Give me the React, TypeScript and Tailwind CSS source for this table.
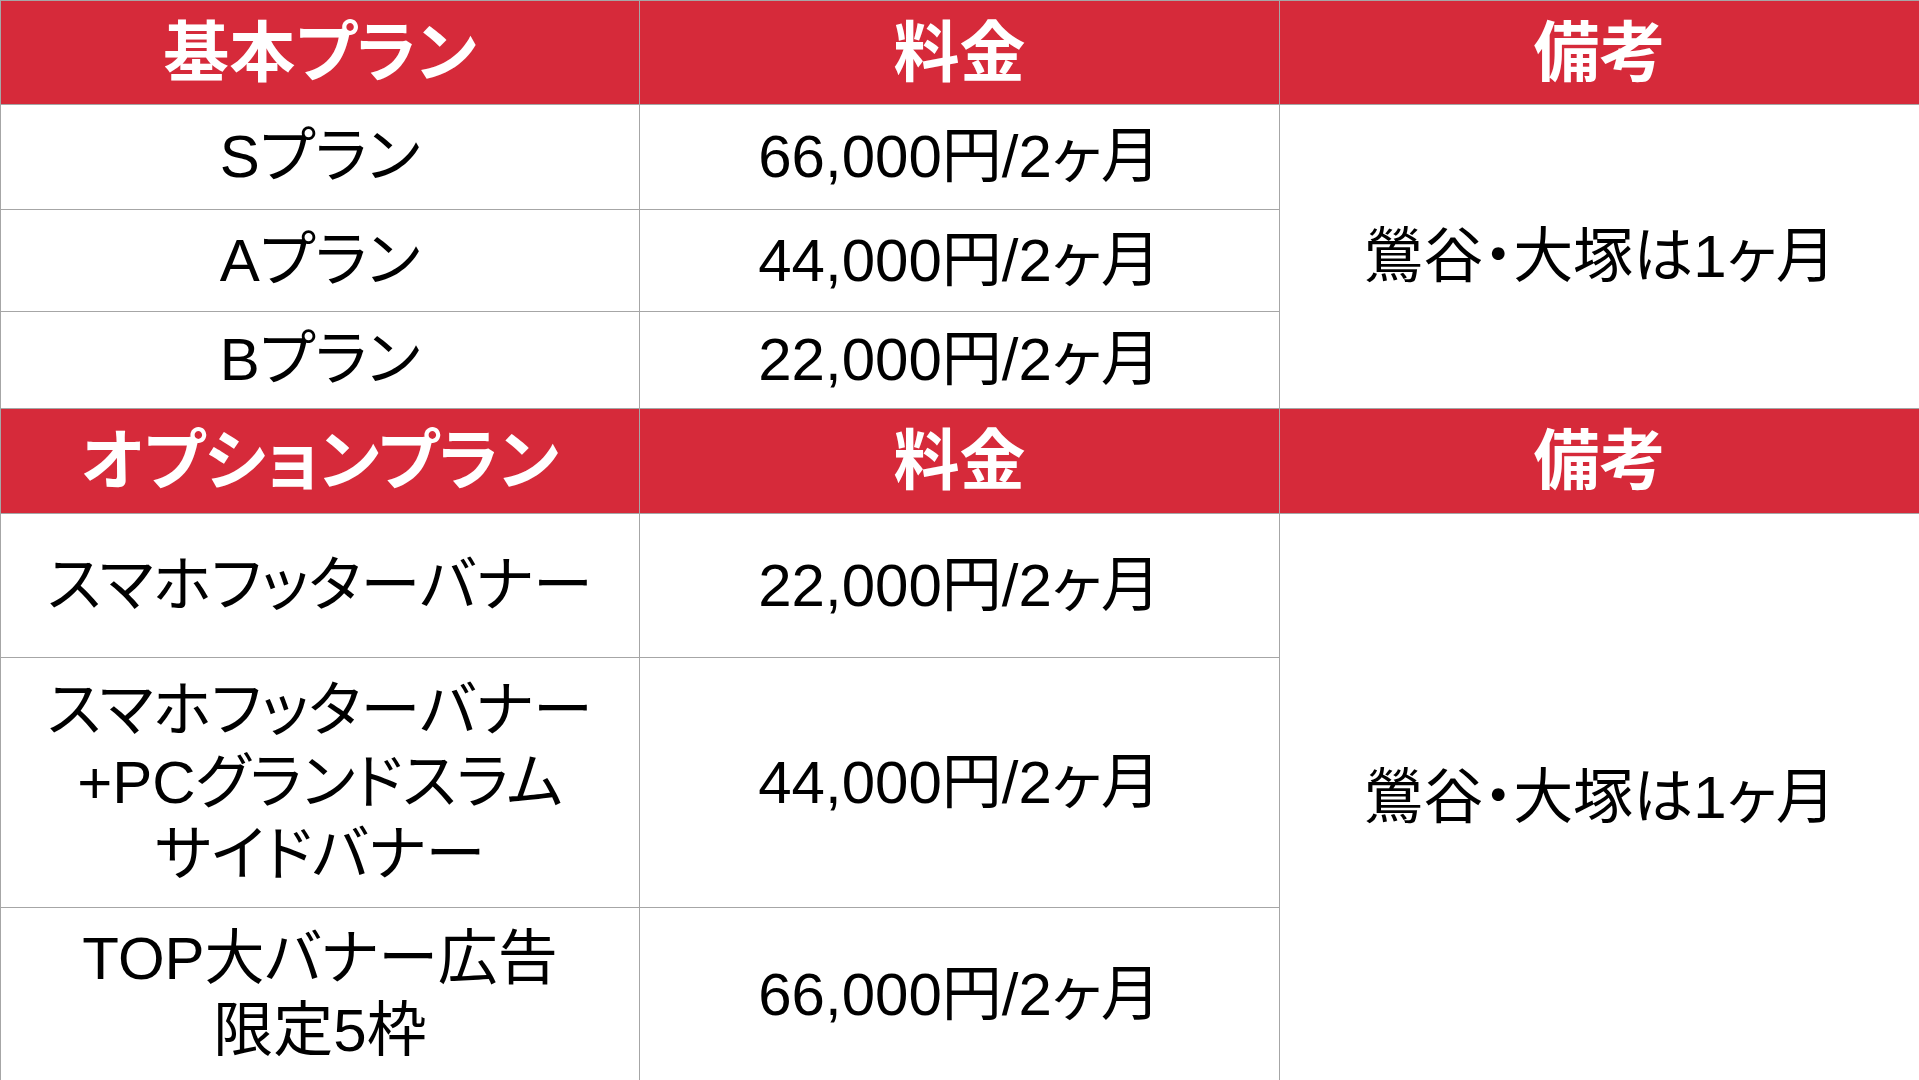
const font = "[font-family:'Liberation_Sans','Noto_Sans_CJK_JP',sans-serif] [font-feature-settings:'palt']";

const headCell = "bg-[#d62a3a] text-white font-bold text-[66px] leading-none text-center align-middle border border-[#a6a6a6]";
const bodyCell = "bg-white text-black text-[60px] leading-[72px] text-center align-middle border border-[#a6a6a6]";

function HeaderRow({ title, h }: { title: string; h: string }) {
  return (
    <tr className={h}>
      <th className={headCell}>{title}</th>
      <th className={headCell}>料金</th>
      <th className={headCell}>備考</th>
    </tr>
  );
}

export default function App() {
  return (
    <div className={`w-[1919px] h-[1080px] overflow-hidden bg-white ${font}`}>
      <table className="w-[1919px] table-fixed border-collapse">
        <colgroup>
          <col className="w-[639px]" />
          <col className="w-[640px]" />
          <col className="w-[640px]" />
        </colgroup>
        <tbody>
          <HeaderRow title="基本プラン" h="h-[104px]" />
          <tr className="h-[105px]">
            <td className={bodyCell}>Sプラン</td>
            <td className={bodyCell}>66,000円/2ヶ月</td>
            <td className={bodyCell} rowSpan={3}>鶯谷・大塚は1ヶ月</td>
          </tr>
          <tr className="h-[102px]">
            <td className={bodyCell}>Aプラン</td>
            <td className={bodyCell}>44,000円/2ヶ月</td>
          </tr>
          <tr className="h-[97px]">
            <td className={bodyCell}>Bプラン</td>
            <td className={bodyCell}>22,000円/2ヶ月</td>
          </tr>
          <HeaderRow title="オプションプラン" h="h-[105px]" />
          <tr className="h-[144px]">
            <td className={bodyCell}>スマホフッターバナー</td>
            <td className={bodyCell}>22,000円/2ヶ月</td>
            <td className={bodyCell} rowSpan={3}>鶯谷・大塚は1ヶ月</td>
          </tr>
          <tr className="h-[250px]">
            <td className={bodyCell}>
              スマホフッターバナー
              <br />
              +PCグランドスラム
              <br />
              サイドバナー
            </td>
            <td className={bodyCell}>44,000円/2ヶ月</td>
          </tr>
          <tr className="h-[174px]">
            <td className={bodyCell}>
              TOP大バナー広告
              <br />
              限定5枠
            </td>
            <td className={bodyCell}>66,000円/2ヶ月</td>
          </tr>
        </tbody>
      </table>
    </div>
  );
}
